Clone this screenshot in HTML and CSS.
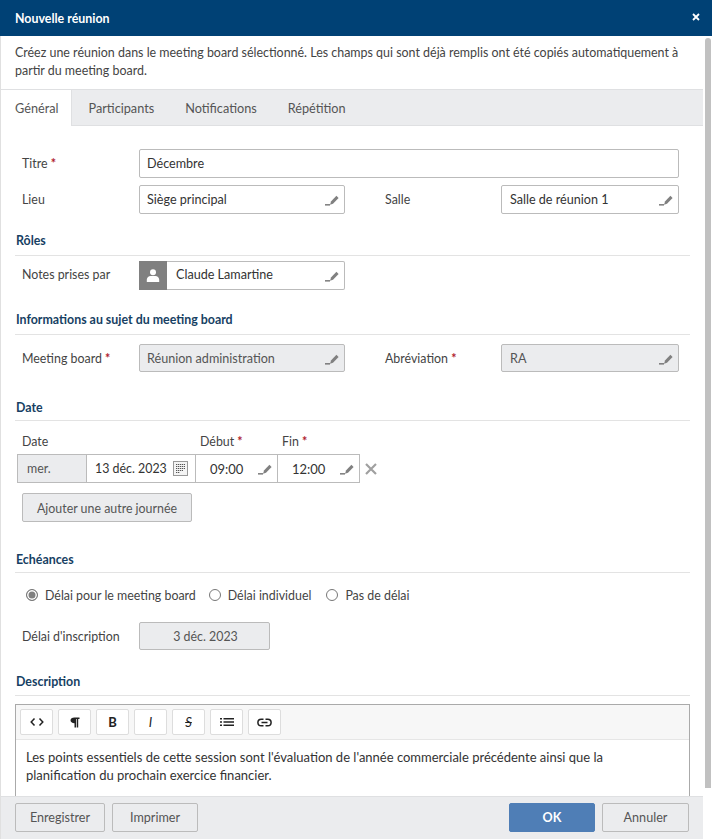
FILE: index.html
```html
<!DOCTYPE html>
<html lang="fr">
  <head>
    <meta charset="utf-8" />
    <title>Nouvelle réunion</title>
    <link rel="stylesheet" href="styles.css">
  </head>

  <body>
    <div class="dialog">
      <div class="dialog-header">
        <span class="dialog-title">Nouvelle réunion</span>
        <svg class="close-icon" width="8" height="8" viewBox="0 0 8 8"><path d="M1 1l6 6M7 1l-6 6" stroke="#fff" stroke-width="1.800" fill="none"/></svg>
      </div>

      <div class="dialog-main">
        <div class="dialog-column">
          <p class="intro">Créez une réunion dans le meeting board sélectionné. Les champs qui sont déjà remplis ont été copiés automatiquement à partir du meeting board.</p>

          <div class="tabs">
            <div class="tab active">Général</div>
            <div class="tab">Participants</div>
            <div class="tab">Notifications</div>
            <div class="tab">Répétition</div>
          </div>

          <div class="form">
            <div class="row row-title">
              <label class="label">Titre <span class="req">*</span></label>
              <div class="field wide">Décembre</div>
            </div>
            <div class="row">
              <label class="label">Lieu</label>
              <div class="field half">Siège principal <svg class="pen"><use href="#pen"/></svg></div>
              <label class="label label-second">Salle</label>
              <div class="field small">Salle de réunion 1 <svg class="pen"><use href="#pen"/></svg></div>
            </div>

            <h3 class="section section-roles">Rôles</h3>
            <div class="row row-notes">
              <label class="label">Notes prises par</label>
              <div class="field half with-avatar">
                <span class="avatar">
                  <svg width="14" height="14" viewBox="0 0 14 14"><circle cx="7" cy="3.200" r="3" fill="#fff"/><path d="M0.800 13V10.800C0.800 8.500 2.800 7 4.500 7H9.500C11.200 7 13.200 8.500 13.200 10.800V13z" fill="#fff"/></svg>
                </span>
                <span class="avatar-name">Claude Lamartine</span>
                <svg class="pen"><use href="#pen"/></svg>
              </div>
            </div>

            <h3 class="section section-info">Informations au sujet du meeting board</h3>
            <div class="row">
              <label class="label">Meeting board <span class="req">*</span></label>
              <div class="field half disabled">Réunion administration <svg class="pen"><use href="#pen"/></svg></div>
              <label class="label label-second">Abréviation <span class="req">*</span></label>
              <div class="field small disabled">RA <svg class="pen"><use href="#pen"/></svg></div>
            </div>

            <h3 class="section section-date">Date</h3>
            <div class="date-labels">
              <span class="date-label-day">Date</span>
              <span class="date-label-start">Début <span class="req">*</span></span>
              <span>Fin <span class="req">*</span></span>
            </div>
            <div class="date-row">
              <div class="date-cell day">mer.</div>
              <div class="date-cell date">13 déc. 2023
                <svg class="calendar" width="15" height="15" viewBox="0 0 15 15">
                  <rect x="0.500" y="0.500" width="14" height="14" fill="#f4f4f4" stroke="#999"/>
                  <path d="M3 3.500h9M3 5.500h9M3 7.500h9M3 9.500h7M3 11.500h4" stroke="#555" stroke-width="1.200" stroke-dasharray="1.300 .7" fill="none"/>
                </svg>
              </div>
              <div class="date-cell time">09:00 <svg class="pen"><use href="#pen"/></svg></div>
              <div class="date-cell time">12:00 <svg class="pen"><use href="#pen"/></svg></div>
              <svg class="remove" width="12" height="12" viewBox="0 0 12 12"><path d="M1 1l10 10M11 1L1 11" stroke="#a0a0a0" stroke-width="2.200" fill="none"/></svg>
            </div>
            <button class="btn btn-add">Ajouter une autre journée</button>

            <h3 class="section section-deadline">Echéances</h3>
            <div class="radios">
              <span class="radio-item"><span class="radio checked"></span>Délai pour le meeting board</span>
              <span class="radio-item"><span class="radio"></span>Délai individuel</span>
              <span class="radio-item radio-last"><span class="radio"></span>Pas de délai</span>
            </div>
            <div class="row row-deadline">
              <label class="label">Délai d'inscription</label>
              <div class="field deadline disabled">3 déc. 2023</div>
            </div>

            <h3 class="section section-desc">Description</h3>
            <div class="editor">
              <div class="toolbar">
                <span class="tool">
                  <svg width="14" height="10" viewBox="0 0 14 10"><path d="M4.500 1.500L1.200 5 4.500 8.500M9.500 1.500L12.800 5 9.500 8.500" stroke="#222" stroke-width="1.500" fill="none"/></svg>
                </span>
                <span class="tool">
                  <svg width="10" height="11" viewBox="0 0 10 11"><path d="M4.500 0.500H9.500V2H8.200V10.500H6.700V2H6V10.500H4.500V6.200C2 6.200 0.500 5 0.500 3.300S2 0.500 4.500 0.500Z" fill="#222"/></svg>
                </span>
                <span class="tool tool-bold">B</span>
                <span class="tool tool-italic">I</span>
                <span class="tool tool-strike">S</span>
                <span class="tool">
                  <svg width="14" height="10" viewBox="0 0 14 10"><path d="M0 1h2v1.500H0zM0 4.300h2v1.500H0zM0 7.500h2V9H0zM3.500 1H14v1.500H3.500zM3.500 4.300H14v1.500H3.500zM3.500 7.500H14V9H3.500z" fill="#222"/></svg>
                </span>
                <span class="tool">
                  <svg width="15" height="9" viewBox="0 0 15 9"><path d="M6.500 1.200H4.200a3.300 3.300 0 0 0 0 6.600h2.300M8.500 1.200h2.300a3.300 3.300 0 0 1 0 6.600H8.500M4.500 4.500h6" stroke="#222" stroke-width="1.500" fill="none"/></svg>
                </span>
              </div>
              <div class="editor-text">Les points essentiels de cette session sont l'évaluation de l'année commerciale précédente ainsi que la planification du prochain exercice financier.</div>
            </div>
          </div>

          <div class="dialog-footer">
            <button class="btn btn-save">Enregistrer</button>
            <button class="btn btn-print">Imprimer</button>
            <button class="btn btn-ok">OK</button>
            <button class="btn btn-cancel">Annuler</button>
          </div>
        </div>

        <div class="scrollbar"><div class="scroll-thumb"></div></div>
      </div>
    </div>

    <svg class="icon-defs" width="0" height="0">
      <symbol id="pen" viewBox="0 0 15 13">
        <path d="M1 11.200h5v1.300H1z" fill="#666"/>
        <path d="M6 11.800l1-3.300L12.400 2.700 14.600 5 9 10.800z" fill="#808080"/>
      </symbol>
    </svg>
  </body>
</html>
```

FILE: styles.css
```css
* {
  box-sizing: border-box;
}

html, body {
  margin: 0;
  height: 100%;
  overflow: hidden;
}

body {
  font-family: 'Lato', sans-serif;
  font-size: 12.400px;
  color: #444;
  background-color: #fff;
}

.dialog {
  display: flex;
  flex-direction: column;
  height: 839px;
}

.dialog-header {
  height: 36px;
  flex: none;
  display: flex;
  align-items: center;
  justify-content: space-between;
  padding: 0 12px 0 15px;
  background-color: #004175;
}

.dialog-title {
  color: #fff;
  font-weight: 700;
  font-size: 12.400px;
}

.close-icon {
  margin-bottom: 2px;
}

.dialog-main {
  flex: 1;
  min-height: 0;
  display: flex;
}

.dialog-column {
  width: 703px;
  display: flex;
  flex-direction: column;
  border-left: 1px solid #e0e0e0;
}

.scrollbar {
  flex: 1;
  padding: 2px 0 0 2px;
}

.scroll-thumb {
  width: 6px;
  height: 750px;
  border-radius: 3px 3px 0 0;
  background-color: #c1c1c1;
}

.intro {
  margin: 0;
  height: 53px;
  flex: none;
  padding: 8px 14px 0;
  font-size: 12.450px;
  line-height: 18px;
}

.tabs {
  height: 37px;
  flex: none;
  display: flex;
  background-color: #ebecee;
  border-top: 1px solid #dfe0e2;
  border-bottom: 1px solid #dfe0e2;
  font-size: 12.700px;
}

.tab {
  padding: 10px 15.500px 0;
  color: #555;
}

.tab.active {
  width: 71px;
  padding-left: 14px;
  padding-right: 0;
  margin-right: 1px;
  margin-bottom: -1px;
  background-color: #fff;
  border-right: 1px solid #dfe0e2;
}

.form {
  flex: 1;
  min-height: 0;
  overflow: hidden;
  padding: 23px 13px 0 14px;
}

.row {
  display: flex;
  align-items: center;
  padding-left: 7px;
  margin-bottom: 7px;
}

.label {
  width: 117px;
  flex: none;
}

.label-second {
  width: 116px;
  margin-left: 40px;
}

.row-notes .label,
.row-notes .avatar-name {
  padding-bottom: 2px;
}

.req {
  color: #b01c2e;
  font-weight: 700;
}

.field {
  height: 29px;
  display: flex;
  align-items: center;
  justify-content: space-between;
  padding: 0 5px 0 7px;
  background-color: #fff;
  border: 1px solid #bbb;
  border-radius: 2px;
  font-size: 12.600px;
  color: #333;
}

.field.wide {
  width: 540px;
}

.field.half {
  width: 206px;
}

.field.small {
  width: 178px;
  padding-left: 8px;
}

.field.disabled {
  height: 28px;
  background-color: #ebecee;
  color: #555;
}

.field.deadline {
  width: 131px;
  justify-content: center;
  font-size: 12.400px;
}

.pen {
  width: 15px;
  height: 13px;
  flex: none;
}

.with-avatar {
  padding-left: 0;
  border-left: none;
}

.avatar {
  width: 28px;
  height: 29px;
  flex: none;
  display: flex;
  align-items: center;
  justify-content: center;
  background-color: #808080;
}

.avatar-name {
  flex: 1;
  padding-left: 9px;
}

.section {
  margin: 0;
  padding-left: 1px;
  font-size: 12.400px;
  font-weight: 700;
  line-height: 16px;
  color: #173f63;
  border-bottom: 1px solid #e3e3e3;
}

.section-roles {
  margin-top: 19px;
  margin-bottom: 5px;
  padding-bottom: 6px;
}

.section-info {
  margin-top: 22px;
  margin-bottom: 9px;
  padding-bottom: 6px;
}

.section-date {
  margin-top: 28px;
  margin-bottom: 12px;
  padding-bottom: 4px;
}

.section-deadline {
  margin-top: 30px;
  margin-bottom: 13px;
  padding-bottom: 4px;
}

.section-desc {
  margin-top: 24px;
  margin-bottom: 8px;
  padding-bottom: 5px;
}

.date-labels {
  display: flex;
  padding: 1px 0 0 7px;
  height: 21px;
  line-height: 15px;
}

.date-label-day {
  width: 178px;
}

.date-label-start {
  width: 82px;
}

.date-row {
  display: flex;
  align-items: center;
  padding-left: 2px;
  margin-bottom: 10px;
}

.date-cell {
  height: 29px;
  display: flex;
  align-items: center;
  justify-content: space-between;
  padding: 0 5px 0 8px;
  background-color: #fff;
  border: 1px solid #bbb;
  margin-right: -1px;
  color: #333;
}

.date-cell.day {
  width: 70px;
  padding-left: 9px;
  background-color: #ebecee;
  color: #555;
}

.date-cell.date {
  width: 110px;
  padding-right: 7px;
}

.date-cell.time {
  width: 83px;
  padding-left: 14px;
  font-size: 13px;
}

.remove {
  margin-left: 6px;
}

.btn {
  height: 29px;
  background-color: #ebecee;
  border: 1px solid #bbb;
  border-radius: 2px;
  font-family: 'Lato', sans-serif;
  font-size: 12.600px;
  color: #555;
  padding: 0;
}

.btn-add {
  width: 170px;
  margin-left: 7px;
  display: block;
  font-size: 12.400px;
  padding-top: 2px;
}

.radios {
  display: flex;
  align-items: center;
  padding-left: 11px;
  height: 18px;
  gap: 13px;
  margin-bottom: 18px;
}

.radio-item {
  display: flex;
  align-items: center;
}

.radio-last {
  margin-left: 2px;
}

.radio {
  width: 12px;
  height: 12px;
  margin-right: 7px;
  border: 1px solid #777;
  border-radius: 50%;
  background-color: #fff;
}

.radio.checked {
  background-color: #808080;
  box-shadow: inset 0 0 0 1.500px #fff;
}

.row-deadline {
  margin-bottom: 0;
}

.editor {
  border: 1px solid #aaa;
  border-bottom: none;
  height: 100px;
}

.toolbar {
  height: 35px;
  display: flex;
  gap: 5px;
  padding: 4px 4px 0;
  background-color: #f7f7f7;
  border-bottom: 1px solid #e6e6e6;
}

.tool {
  width: 33px;
  height: 26px;
  display: flex;
  align-items: center;
  justify-content: center;
  background-color: #fff;
  border: 1px solid #ddd;
  border-radius: 2px;
  color: #222;
  font-size: 13px;
}

.tool-bold {
  font-weight: 700;
}

.tool-italic {
  font-style: italic;
}

.tool-strike {
  text-decoration: line-through;
  font-style: italic;
}

.editor-text {
  padding: 8px 30px 8px 10px;
  font-size: 13px;
  line-height: 18px;
  color: #333;
}

.dialog-footer {
  height: 43px;
  flex: none;
  display: flex;
  align-items: center;
  gap: 7px;
  padding: 0 14px 1px;
  background-color: #ebecee;
  border-top: 1px solid #dfe0e2;
}

.btn-save {
  width: 90px;
}

.btn-print {
  width: 86px;
  margin-right: auto;
}

.btn-ok {
  width: 86px;
  background-color: #4f7eb6;
  border-color: #4f7eb6;
  color: #fff;
  font-weight: 700;
}

.btn-cancel {
  width: 87px;
}

.icon-defs {
  display: none;
}
```
